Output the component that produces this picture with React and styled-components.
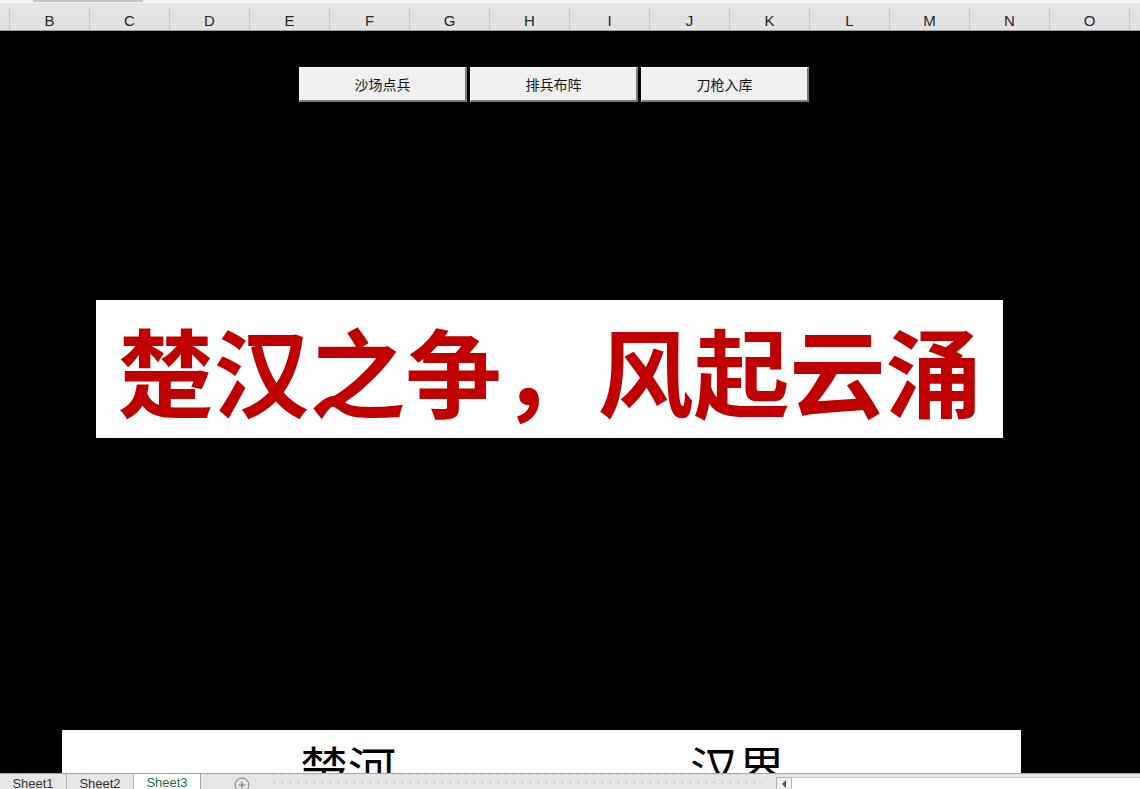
import React from 'react'
import styled, { createGlobalStyle } from 'styled-components'

const GlobalStyle = createGlobalStyle`
  html, body {
    margin: 0;
    padding: 0;
    background: #000;
  }
  * {
    box-sizing: border-box;
  }
`

const columns = ['B', 'C', 'D', 'E', 'F', 'G', 'H', 'I', 'J', 'K', 'L', 'M', 'N', 'O']
const buttons = ['沙场点兵', '排兵布阵', '刀枪入库']
const sheets = ['Sheet1', 'Sheet2', 'Sheet3']

const App = () => {
  return (
    <Page>
      <GlobalStyle />
      <TopStrip>
        <NameBoxEdge />
      </TopStrip>
      <ColumnHeader>
        <HeaderCell $width={10} />
        {columns.map((c) => (
          <HeaderCell key={c} $width={80}>{c}</HeaderCell>
        ))}
        <HeaderCell $width={10} $last />
      </ColumnHeader>
      <Sheet>
        <ButtonRow>
          {buttons.map((b) => (
            <SheetButton key={b}>{b}</SheetButton>
          ))}
        </ButtonRow>
        <Banner>楚汉之争，风起云涌</Banner>
        <Board>
          <BoardText>楚河</BoardText>
          <BoardText>汉界</BoardText>
        </Board>
      </Sheet>
      <TabBar>
        <Tabs>
          {sheets.map((s, i) => (
            <Tab key={s} $active={i === 2}>{s}</Tab>
          ))}
        </Tabs>
        <AddSheet>
          <svg width="16" height="16" viewBox="0 0 16 16">
            <circle cx="8" cy="8" r="7" fill="none" stroke="#777" strokeWidth="1" />
            <path d="M8 4.5v7M4.5 8h7" stroke="#777" strokeWidth="1.2" />
          </svg>
        </AddSheet>
        <Dots />
        <ScrollArea>
          <ScrollArrow>
            <svg width="6" height="8" viewBox="0 0 6 8">
              <path d="M5 0L1 4l4 4z" fill="#555" />
            </svg>
          </ScrollArrow>
          <ScrollTrack />
        </ScrollArea>
      </TabBar>
    </Page>
  )
}

export default App

const Page = styled.div`
  width: 1140px;
  height: 789px;
  overflow: hidden;
  display: flex;
  flex-direction: column;
  background: #000;
`

const TopStrip = styled.div`
  height: 3px;
  background: #f3f3f3;
  display: flex;
  flex-shrink: 0;
`

const NameBoxEdge = styled.div`
  margin-left: 33px;
  width: 110px;
  height: 2px;
  background: #c6c6c6;
`

const ColumnHeader = styled.div`
  display: flex;
  height: 28px;
  flex-shrink: 0;
  background: #e6e6e6;
  border-bottom: 1px solid #9b9b9b;
  font-family: "Liberation Sans", Arial, sans-serif;
  font-size: 15px;
  color: #262626;
`

const HeaderCell = styled.div`
  width: ${(p) => p.$width}px;
  flex-shrink: 0;
  display: flex;
  align-items: flex-end;
  justify-content: center;
  padding-bottom: 1px;
  border-right: ${(p) => (p.$last ? 'none' : '1px solid #c8c8c8')};
  background: linear-gradient(to bottom, #e6e6e6 0, #e6e6e6 6px, #e2e2e2 6px);
  position: relative;

  &::before {
    content: '';
    position: absolute;
    top: 0;
    right: -1px;
    height: 6px;
    width: 1px;
    background: #e6e6e6;
  }
`

const Sheet = styled.div`
  flex: 1;
  background: #000;
  overflow: hidden;
  padding-top: 36px;
  display: flex;
  flex-direction: column;
`

const ButtonRow = styled.div`
  display: flex;
  flex-shrink: 0;
  gap: 3px;
  margin-left: 299px;
`

const SheetButton = styled.div`
  width: 168px;
  height: 35px;
  background: #f0f0f0;
  border-style: solid;
  border-width: 1px 2px 2px 1px;
  border-color: #fcfcfc #7a7a7a #7a7a7a #fcfcfc;
  display: flex;
  align-items: center;
  justify-content: center;
  font-family: "Noto Sans CJK SC", "Noto Sans", sans-serif;
  font-size: 14px;
  color: #111;
`

const Banner = styled.div`
  margin-top: 198px;
  margin-left: 96px;
  width: 907px;
  height: 138px;
  flex-shrink: 0;
  background: #fff;
  display: flex;
  align-items: center;
  justify-content: center;
  font-family: "Noto Sans CJK SC", sans-serif;
  font-weight: 700;
  font-size: 96px;
  line-height: 1;
  color: #c00000;
  white-space: nowrap;
`

const Board = styled.div`
  margin-top: 292px;
  margin-left: 62px;
  width: 959px;
  height: 120px;
  flex-shrink: 0;
  background: #fff;
  display: flex;
  gap: 294px;
  padding-left: 238px;
  padding-top: 8px;
`

const BoardText = styled.div`
  font-family: "Noto Sans CJK SC", sans-serif;
  font-weight: 400;
  font-size: 48px;
  line-height: 1.2;
  color: #000;
`

const TabBar = styled.div`
  height: 16px;
  flex-shrink: 0;
  display: flex;
  align-items: flex-start;
  background: #e6e6e6;
  border-top: 1px solid #a6a6a6;
  overflow: hidden;
  font-family: "Liberation Sans", Arial, sans-serif;
  font-size: 13px;
`

const Tabs = styled.div`
  display: flex;
  height: 100%;
`

const Tab = styled.div`
  width: 67px;
  padding-top: 2px;
  text-align: center;
  color: ${(p) => (p.$active ? '#217346' : '#333')};
  background: ${(p) => (p.$active ? '#fff' : '#e6e6e6')};
  border-right: 1px solid ${(p) => (p.$active ? '#a6a6a6' : '#b8b8b8')};
  margin-top: ${(p) => (p.$active ? '-1px' : '0')};
  height: 30px;
`

const AddSheet = styled.div`
  margin-left: 33px;
  margin-top: 3px;
  display: flex;
`

const Dots = styled.div`
  flex: 1;
  height: 100%;
  margin-left: 20px;
  background-image: radial-gradient(#cfcfcf 1px, transparent 1px);
  background-size: 8px 8px;
  background-position: 0 4px;
`

const ScrollArea = styled.div`
  width: 364px;
  display: flex;
  height: 100%;
  margin-top: 3px;
  margin-left: 14px;
`

const ScrollArrow = styled.div`
  width: 16px;
  height: 14px;
  border: 1px solid #b5b5b5;
  background: #f0f0f0;
  display: flex;
  align-items: center;
  justify-content: center;
`

const ScrollTrack = styled.div`
  flex: 1;
  height: 14px;
  background: #fff;
  border-top: 1px solid #c6c6c6;
`
